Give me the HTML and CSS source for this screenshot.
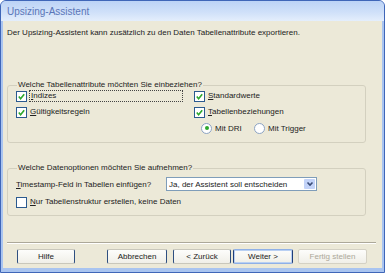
FILE: index.html
```html
<!DOCTYPE html>
<html lang="de">
<head>
    <meta charset="UTF-8">
    <title>Upsizing-Assistent</title>
    <link rel="stylesheet" href="styles.css">
</head>
<body>
    <div class="window">
        <div class="titlebar">Upsizing-Assistent</div>
        <div class="client">
            <p class="intro">Der Upsizing-Assistent kann zusätzlich zu den Daten Tabellenattribute exportieren.</p>

            <fieldset class="group group-attrs">
                <legend>Welche Tabellenattribute möchten Sie einbeziehen?</legend>
                <div class="attr-grid">
                    <div class="col col-left">
                        <div class="check">
                            <span class="box"><svg viewBox="0 0 10 10"><path d="M2 5 L4 7.5 L8 2.5" /></svg></span>
                            <span class="label focus"><u>I</u>ndizes</span>
                        </div>
                        <div class="check">
                            <span class="box"><svg viewBox="0 0 10 10"><path d="M2 5 L4 7.5 L8 2.5" /></svg></span>
                            <span class="label"><u>G</u>ültigkeitsregeln</span>
                        </div>
                    </div>
                    <div class="col col-right">
                        <div class="check">
                            <span class="box"><svg viewBox="0 0 10 10"><path d="M2 5 L4 7.5 L8 2.5" /></svg></span>
                            <span class="label"><u>S</u>tandardwerte</span>
                        </div>
                        <div class="check">
                            <span class="box"><svg viewBox="0 0 10 10"><path d="M2 5 L4 7.5 L8 2.5" /></svg></span>
                            <span class="label"><u>T</u>abellenbeziehungen</span>
                        </div>
                        <div class="radios">
                            <div class="radio">
                                <span class="dot on"></span>
                                <span class="label">Mit DRI</span>
                            </div>
                            <div class="radio">
                                <span class="dot"></span>
                                <span class="label">Mit Trigger</span>
                            </div>
                        </div>
                    </div>
                </div>
            </fieldset>

            <fieldset class="group group-data">
                <legend>Welche Datenoptionen möchten Sie aufnehmen?</legend>
                <div class="field-row">
                    <span class="field-label"><u>T</u>imestamp-Feld in Tabellen einfügen?</span>
                    <div class="select">
                        <span class="select-text">Ja, der Assistent soll entscheiden</span>
                        <span class="select-btn"><svg viewBox="0 0 8 8"><path d="M1.5 2.5 L4 5 L6.5 2.5" /></svg></span>
                    </div>
                </div>
                <div class="check">
                    <span class="box empty"></span>
                    <span class="label"><u>N</u>ur Tabellenstruktur erstellen, keine Daten</span>
                </div>
            </fieldset>

            <div class="separator"></div>

            <div class="buttons">
                <button class="btn btn-help">Hilfe</button>
                <button class="btn btn-cancel">Abbrechen</button>
                <button class="btn btn-back">&lt; Zurück</button>
                <button class="btn btn-next default">Weiter &gt;</button>
                <button class="btn btn-finish" disabled>Fertig stellen</button>
            </div>
        </div>
    </div>
</body>
</html>
```

FILE: styles.css
```css
body {
    margin: 0;
    padding: 0;
    font-family: "Liberation Sans", Arial, sans-serif;
    font-size: 8px;
    color: #222;
}
.window {
    width: 385px;
    height: 273px;
    box-sizing: border-box;
    display: flex;
    flex-direction: column;
    background: #a9c4f0;
    border: 1px solid #3f66b8;
    border-radius: 6px 6px 0 0;
    overflow: hidden;
}
.titlebar {
    height: 20px;
    flex: none;
    padding-left: 6px;
    line-height: 22px;
    font-size: 10px;
    color: #5a76b8;
    background: linear-gradient(#bcd3f6, #cfe0f9 55%, #e4eefc);
}
.client {
    flex: 1;
    margin: 0 2px 4px 2px;
    padding: 7px 4px 0 4px;
    background: #ece9d8;
    display: flex;
    flex-direction: column;
}
.intro {
    margin: 0;
    line-height: 10px;
}
.group {
    margin: 42px 0 0 0;
    padding: 0 0 0 8px;
    width: 359px;
    box-sizing: border-box;
    border: 1px solid #d3d0bf;
    border-radius: 3px;
    min-width: 0;
}
.group legend {
    padding: 0 1px;
    margin-left: 1px;
    line-height: 10px;
}
.group-attrs {
    height: 63px;
}
.attr-grid {
    display: flex;
}
.col {
    display: flex;
    flex-direction: column;
    gap: 4px;
}
.col-left {
    width: 178px;
}
.check {
    display: flex;
    align-items: center;
    height: 12px;
}
.box {
    width: 9px;
    height: 9px;
    flex: none;
    border: 1px solid #2b5a8f;
    background: #fff;
    display: flex;
}
.box svg {
    width: 9px;
    height: 9px;
}
.box path {
    fill: none;
    stroke: #2da82d;
    stroke-width: 1.8;
}
.check .label {
    margin-left: 2px;
    padding: 0 1px;
    line-height: 10px;
}
.col-left .focus {
    width: 150px;
    border: 1px dotted #444;
}
.radios {
    display: flex;
    padding-left: 7px;
    height: 12px;
    align-items: center;
}
.radio {
    display: flex;
    align-items: center;
    width: 53px;
}
.dot {
    width: 9px;
    height: 9px;
    border: 1px solid #8da4c4;
    border-radius: 50%;
    background: #fff;
    display: flex;
    align-items: center;
    justify-content: center;
}
.dot.on::after {
    content: "";
    width: 4px;
    height: 4px;
    border-radius: 50%;
    background: #2da82d;
}
.radio .label {
    margin-left: 3px;
}
.group-data {
    height: 53px;
    margin-top: 20px;
}
.field-row {
    display: flex;
    align-items: center;
    height: 14px;
    margin-top: 4px;
    margin-bottom: 5px;
}
.field-label {
    width: 150px;
}
.select {
    width: 151px;
    height: 14px;
    box-sizing: border-box;
    border: 1px solid #7f9db9;
    background: #fff;
    display: flex;
    align-items: center;
    justify-content: space-between;
    padding-left: 2px;
}
.select-btn {
    width: 11px;
    height: 10px;
    margin-right: 1px;
    background: #c3d3f8;
    border-radius: 1px;
    display: flex;
    align-items: center;
    justify-content: center;
}
.select-btn svg {
    width: 8px;
    height: 8px;
}
.select-btn path {
    fill: none;
    stroke: #3a4d78;
    stroke-width: 1.6;
}
.separator {
    margin-top: 26px;
    width: 369px;
    border-top: 1px solid #aca899;
    border-bottom: 1px solid #fff;
}
.buttons {
    display: flex;
    margin-top: 5px;
    padding-left: 10px;
}
.btn {
    height: 15px;
    padding: 0;
    font-family: inherit;
    font-size: 8px;
    color: #222;
    background: linear-gradient(#fdfdfb, #f0efe8);
    border: 1px solid #c9c7bb;
    border-left-color: #2e4f80;
    border-right-color: #2e4f80;
    border-radius: 2px;
}
.btn-help {
    width: 58px;
    margin-right: 32px;
}
.btn-cancel {
    width: 60px;
    margin-right: 6px;
}
.btn-back {
    width: 58px;
    margin-right: 2px;
}
.btn-next {
    width: 60px;
    margin-right: 5px;
}
.btn.default {
    border-color: #8fb0e6;
    border-left-color: #1f3e78;
    border-right-color: #1f3e78;
    box-shadow: inset 0 0 0 1px #b9d0f3;
}
.btn-finish {
    width: 69px;
    color: #aca899;
    border-color: #d4d1c4;
}
```
